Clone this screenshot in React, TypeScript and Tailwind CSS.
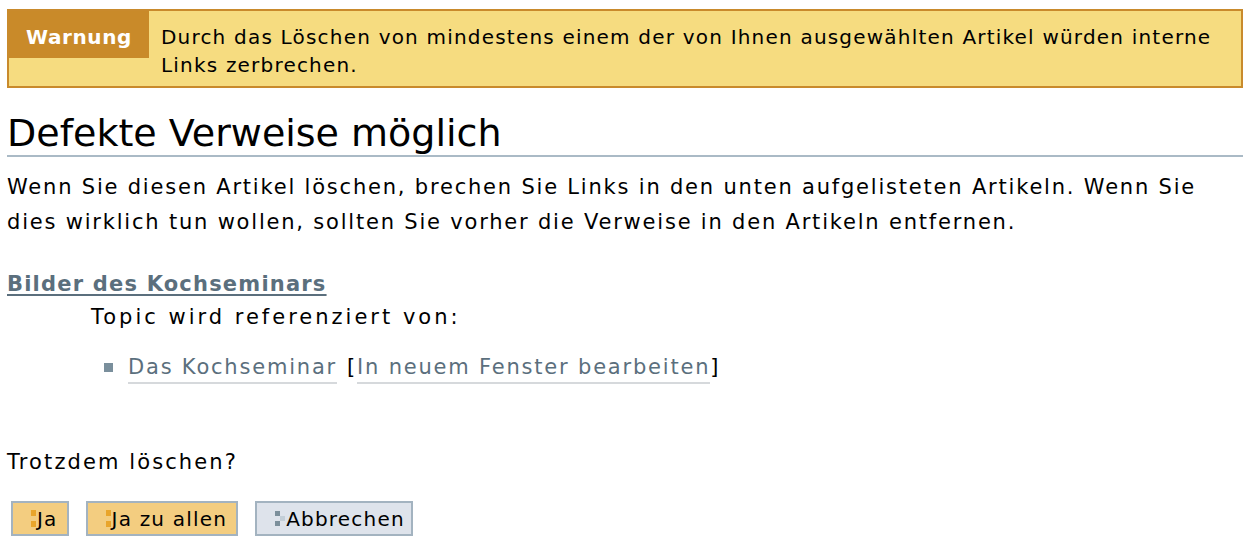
import React from "react";

function YesIcon() {
  return (
    <span className="inline-flex flex-col gap-[5px] mr-[1px]">
      <span className="block w-[5px] h-[6px] bg-[#e9a52b]" />
      <span className="block w-[5px] h-[6px] bg-[#e9a52b]" />
    </span>
  );
}

function CancelIcon() {
  return (
    <span className="inline-grid grid-cols-[5px_5px] grid-rows-[5px_5px_5px] mr-[1px]">
      <span className="bg-[#7c8f9b]" />
      <span />
      <span />
      <span className="bg-[#c3ced7]" />
      <span className="bg-[#7c8f9b]" />
      <span />
    </span>
  );
}

export default function App() {
  return (
    <div
      className="bg-white text-black pl-[7px] pr-[9px] pt-[9px] min-h-[545px]"
      style={{ fontFamily: '"DejaVu Sans", "Liberation Sans", sans-serif' }}
    >
      {/* warning banner */}
      <div className="flex items-start border-2 border-[#c98a2c] bg-[#f6dc80] text-[20px] tracking-[1.2px]">
        <div className="bg-[#c98a29] text-white font-bold px-[17px] pt-[12px] pb-[7px] leading-[28px] tracking-[0.6px] shrink-0">
          Warnung
        </div>
        <div className="pl-3 pr-2 pt-[12px] pb-[7px] leading-[28px]">
          Durch das Löschen von mindestens einem der von Ihnen ausgewählten Artikel würden interne Links zerbrechen.
        </div>
      </div>

      <h1 className="mt-[23px] text-[38px] leading-[44px] border-b-2 border-[#aabac6] font-normal">
        Defekte Verweise möglich
      </h1>

      <p className="mt-[13px] text-[21px] leading-[35px] tracking-[1.8px]">
        Wenn Sie diesen Artikel löschen, brechen Sie Links in den unten aufgelisteten Artikeln. Wenn Sie
        <br />
        dies wirklich tun wollen, sollten Sie vorher die Verweise in den Artikeln entfernen.
      </p>

      <div className="mt-[27px] text-[21px] leading-[35px] tracking-[1.2px]">
        <a className="font-bold text-[#5b6f7d] underline underline-offset-[3px] decoration-[2px]" href="#">
          Bilder des Kochseminars
        </a>
      </div>
      <div className="text-[21px] leading-[35px] tracking-[3px] pl-[84px] -mt-[2px]">Topic wird referenziert von:</div>

      <ul className="mt-[15px] text-[21px] leading-[35px] tracking-[1.8px] pl-[97px]">
        <li className="flex items-center">
          <span className="w-[9px] h-[9px] bg-[#7a8f9c] mr-[15px]" />
          <a className="text-[#5b6f7d] border-b-2 border-[#d6d9dc] leading-[30px]" href="#">
            Das Kochseminar
          </a>
          <span className="ml-[10px]">[</span>
          <a className="text-[#5b6f7d] border-b-2 border-[#d6d9dc] leading-[30px]" href="#">
            In neuem Fenster bearbeiten
          </a>
          <span>]</span>
        </li>
      </ul>

      <p className="mt-[60px] text-[21px] leading-[35px] tracking-[2.1px]">Trotzdem löschen?</p>

      <div className="mt-[21px] flex pl-[4px] text-[20px] tracking-[1.2px]">
        <button className="flex items-center h-[35px] border-2 border-[#a3b3c0] bg-[#f3cd80] pl-[18px] pr-[9px]">
          <YesIcon />
          Ja
        </button>
        <button className="ml-[17px] flex items-center h-[35px] border-2 border-[#a3b3c0] bg-[#f3cd80] pl-[18px] pr-[9px]">
          <YesIcon />
          Ja zu allen
        </button>
        <button className="ml-[17px] flex items-center h-[35px] border-2 border-[#a3b3c0] bg-[#dee3eb] pl-[18px] pr-[6px]">
          <CancelIcon />
          Abbrechen
        </button>
      </div>
    </div>
  );
}
